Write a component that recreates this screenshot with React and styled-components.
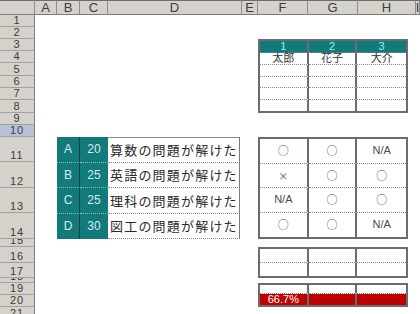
import styled, { createGlobalStyle } from 'styled-components';

const GlobalStyle = createGlobalStyle`
  html, body {
    margin: 0;
    padding: 0;
    background: #fff;
    overflow: hidden;
  }
`;

const COLS = ['A', 'B', 'C', 'D', 'E', 'F', 'G', 'H', 'I'];
// sheet row heights in px, row 1 .. 21
const ROWS = [12, 12, 12, 12, 13, 12, 12, 13, 12, 12, 25, 26, 25, 26, 8, 16, 15, 5, 12, 12, 13];

const TEAL = '#137a7c';
const FRAME = '2px solid #6c6c6c';

const Sheet = styled.div`
  display: grid;
  width: 420px;
  height: 314px;
  overflow: hidden;
  grid-template-columns: 35px 22px 23px 28px 134px 16px 50px 50px 58px 1fr;
  grid-template-rows: 15px ${ROWS.map((h) => h + 'px').join(' ')};
  font-family: "Liberation Sans", Arial, sans-serif;
  background: #fff;
`;

const ColHead = styled.div`
  grid-row: 1;
  display: flex;
  align-items: center;
  justify-content: center;
  box-sizing: border-box;
  background: #d5d2cb;
  border-top: 1px solid #6e6e6e;
  border-right: 1px solid #8e8e8e;
  border-bottom: 1px solid #7c7c7c;
  color: #3c3c3c;
  font-size: 13px;
  overflow: hidden;
`;

const RowHead = styled.div`
  grid-column: 1;
  display: flex;
  align-items: flex-end;
  justify-content: center;
  box-sizing: border-box;
  background: ${(p) => (p.$sel ? '#b8c0d6' : '#d5d2cb')};
  border-right: 1px solid #808080;
  border-bottom: 1px solid #a2a2a2;
  color: #3c3c3c;
  font-size: 11px;
  line-height: 11px;
  letter-spacing: 1px;
  overflow: hidden;
`;

const Block = styled.div`
  grid-column: ${(p) => p.$col};
  grid-row: ${(p) => p.$row};
  margin-right: ${(p) => p.$mr || 0}px;
  display: grid;
  grid-template-columns: ${(p) => p.$cols};
  grid-auto-rows: 1fr;
  box-sizing: border-box;
  border: ${(p) => (p.$framed ? FRAME : 'none')};
`;

const Cell = styled.div`
  display: flex;
  align-items: center;
  justify-content: center;
  box-sizing: border-box;
  min-width: 0;
  border-right: ${(p) => (p.$last ? 'none' : FRAME)};
  border-bottom: ${(p) => (p.$end ? 'none' : '1px dotted #8a8a8a')};
  background: ${(p) => p.$bg || 'transparent'};
  color: ${(p) => p.$fg || '#4a4a4a'};
  font-family: "Liberation Sans", "Noto Sans CJK JP", sans-serif;
  font-size: ${(p) => p.$size || 11}px;
  line-height: 11px;
  white-space: nowrap;
`;

const Mark = styled.span`
  font-family: "Noto Sans CJK JP", sans-serif;
  font-size: ${(p) => (p.$small ? 10 : 11)}px;
  color: #555;
`;

const TealCell = styled.div`
  display: flex;
  align-items: center;
  justify-content: center;
  box-sizing: border-box;
  background: ${TEAL};
  color: #cdeeee;
  font-size: 12px;
  border-right: ${(p) => (p.$divide ? '1px solid #0a3f41' : 'none')};
  border-bottom: ${(p) => (p.$end ? 'none' : '1px dotted #86c2c2')};
`;

const TextCell = styled.div`
  display: flex;
  align-items: center;
  box-sizing: border-box;
  padding-left: 2px;
  border-top: ${(p) => (p.$first ? '1px solid #8a8a8a' : 'none')};
  border-right: 1px solid #7a7a7a;
  border-bottom: 1px dotted #8a8a8a;
  color: #2a2a2a;
  font-family: "Noto Sans CJK JP", sans-serif;
  font-size: 13px;
  letter-spacing: 1.2px;
  white-space: nowrap;
  overflow: hidden;
`;

const subjects = [
  ['A', '20', '算数の問題が解けた'],
  ['B', '25', '英語の問題が解けた'],
  ['C', '25', '理科の問題が解けた'],
  ['D', '30', '図工の問題が解けた'],
];

const marks = [
  ['○', '○', 'N/A'],
  ['×', '○', '○'],
  ['N/A', '○', '○'],
  ['○', '○', 'N/A'],
];

const names = ['太郎', '花子', '大介'];

const renderMark = (v) =>
  v === '○' || v === '×' ? <Mark $small={v === '×'}>{v}</Mark> : v;

const TableRow = ({ values, end, bg, fg, size }) =>
  values.map((v, i) => (
    <Cell key={i} $last={i === values.length - 1} $end={end} $bg={bg} $fg={fg} $size={size}>
      {renderMark(v)}
    </Cell>
  ));

export default function App() {
  return (
    <>
      <GlobalStyle />
      <Sheet>
        <ColHead style={{ gridColumn: 1 }} />
        {COLS.map((c, i) => (
          <ColHead key={c} style={{ gridColumn: i + 2 }}>{c}</ColHead>
        ))}
        {ROWS.map((_, i) => (
          <RowHead key={i} $sel={i === 9} style={{ gridRow: i + 2 }}>{i + 1}</RowHead>
        ))}

        <Block $col="7 / 10" $row="4 / 10" $mr={8} $cols="repeat(3, 1fr)" $framed>
          <TableRow values={['1', '2', '3']} bg={TEAL} fg="#8ff0ee" />
          <TableRow values={names} size={11} fg="#333" />
          <TableRow values={['', '', '']} />
          <TableRow values={['', '', '']} />
          <TableRow values={['', '', '']} />
          <TableRow values={['', '', '']} end />
        </Block>

        <Block $col="3 / 6" $row="12 / 16" $mr={2} $cols="23px 28px 1fr">
          {subjects.map(([k, n, t], i) => [
            <TealCell key={'k' + i} $divide $end={i === 3}>{k}</TealCell>,
            <TealCell key={'n' + i} $end={i === 3}>{n}</TealCell>,
            <TextCell key={'t' + i} $first={i === 0}>{t}</TextCell>,
          ])}
        </Block>

        <Block $col="7 / 10" $row="12 / 16" $mr={8} $cols="repeat(3, 1fr)" $framed>
          {marks.map((r, i) => (
            <TableRow key={i} values={r} end={i === 3} />
          ))}
        </Block>

        <Block $col="7 / 10" $row="17 / 19" $mr={8} $cols="repeat(3, 1fr)" $framed>
          <TableRow values={['', '', '']} />
          <TableRow values={['', '', '']} end />
        </Block>

        <Block $col="7 / 10" $row="20 / 22" $mr={8} $cols="repeat(3, 1fr)" $framed>
          <TableRow values={['', '', '']} />
          <TableRow values={['66.7%', '', '']} end bg="#bf0000" fg="#fff" />
        </Block>
      </Sheet>
    </>
  );
}
